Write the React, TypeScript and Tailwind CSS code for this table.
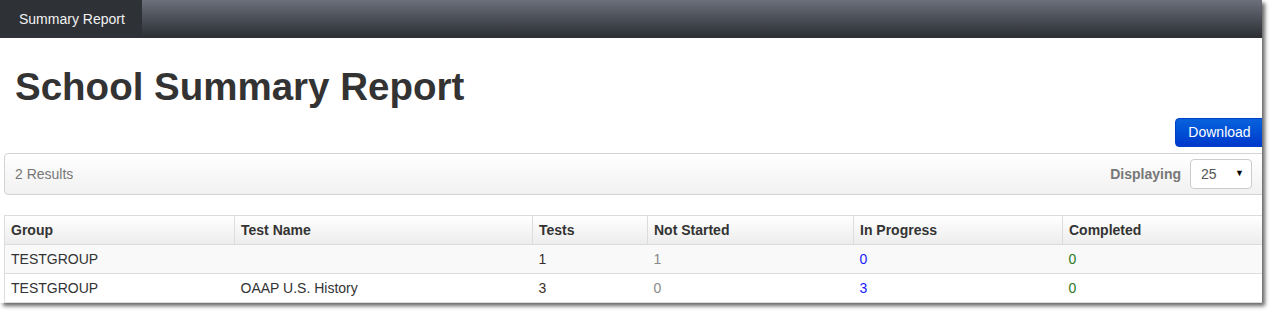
import React from "react";

type Row = {
  group: string;
  testName: string;
  tests: number;
  notStarted: number;
  inProgress: number;
  completed: number;
};

const rows: Row[] = [
  { group: "TESTGROUP", testName: "", tests: 1, notStarted: 1, inProgress: 0, completed: 0 },
  { group: "TESTGROUP", testName: "OAAP U.S. History", tests: 3, notStarted: 0, inProgress: 3, completed: 0 },
];

const columns = [
  { label: "Group", width: "w-[230px]" },
  { label: "Test Name", width: "w-[298px]" },
  { label: "Tests", width: "w-[115px]" },
  { label: "Not Started", width: "w-[206px]" },
  { label: "In Progress", width: "w-[209px]" },
  { label: "Completed", width: "" },
];

function Navbar() {
  return (
    <div className="flex h-[38px] bg-linear-to-b from-[#6c707c] to-[#2b2e33]">
      <div className="flex w-[142px] items-center bg-[#2e3136] pl-[19px] text-[14px] text-[#f2f2f2]">
        Summary Report
      </div>
    </div>
  );
}

function ResultsBar() {
  return (
    <div className="flex h-[42px] items-center justify-between rounded-[4px] border border-[#d3d3d3] bg-linear-to-b from-white to-[#f1f1f1] pl-[10px] pr-[13px]">
      <span className="text-[14px] text-[#777]">2 Results</span>
      <div className="flex items-center gap-[9px]">
        <span className="text-[14px] font-bold text-[#777]">Displaying</span>
        <div className="flex h-[30px] w-[62px] items-center justify-between rounded-[4px] border border-[#ccc] bg-white pl-[10px] pr-[7px] text-[14px] text-[#555]">
          <span>25</span>
          <span className="text-[9px] text-black">▼</span>
        </div>
      </div>
    </div>
  );
}

function SummaryTable() {
  return (
    <table className="w-full border-collapse text-[14px] text-[#333]">
      <thead>
        <tr className="h-[29px] bg-linear-to-b from-white to-[#ececec]">
          {columns.map((c) => (
            <th
              key={c.label}
              className={`${c.width} border border-[#dcdcdc] px-[6px] text-left font-bold`}
            >
              {c.label}
            </th>
          ))}
        </tr>
      </thead>
      <tbody>
        {rows.map((r, i) => (
          <tr
            key={i}
            className={`h-[29px] border border-[#dcdcdc] ${i % 2 === 0 ? "bg-[#f9f9f9]" : "bg-white"}`}
          >
            <td className="px-[6px]">{r.group}</td>
            <td className="px-[6px]">{r.testName}</td>
            <td className="px-[6px] text-[#3a2f2a]">{r.tests}</td>
            <td className="px-[6px] text-[#888]">{r.notStarted}</td>
            <td className="px-[6px] text-[#1a1aff]">{r.inProgress}</td>
            <td className="px-[6px] text-[#2b7a1e]">{r.completed}</td>
          </tr>
        ))}
      </tbody>
    </table>
  );
}

export default function App() {
  return (
    <div className="h-[318px] w-[1277px] bg-white font-['Liberation_Sans',Arial,sans-serif]">
      <div className="h-[303px] w-[1262px] overflow-hidden bg-white shadow-[3px_3px_4px_rgba(0,0,0,0.6)]">
        <Navbar />
        <div className="w-[1262px] pl-[4px]">
          <h1 className="mt-[30px] pl-[11px] text-[38.5px] font-bold leading-[38px] text-[#333]">
            School Summary Report
          </h1>
          <div className="mt-[12px] flex justify-end">
            <button className="mr-[-4px] h-[29px] w-[91px] rounded-l-[4px] border border-[#0040c8] bg-linear-to-b from-[#0a62dc] to-[#0038cc] pr-[2px] text-[14px] text-white">
              Download
            </button>
          </div>
          <div className="mt-[6px] mr-[-4px]">
            <ResultsBar />
          </div>
          <div className="mt-[20px] mr-[-4px]">
            <SummaryTable />
          </div>
        </div>
      </div>
    </div>
  );
}
